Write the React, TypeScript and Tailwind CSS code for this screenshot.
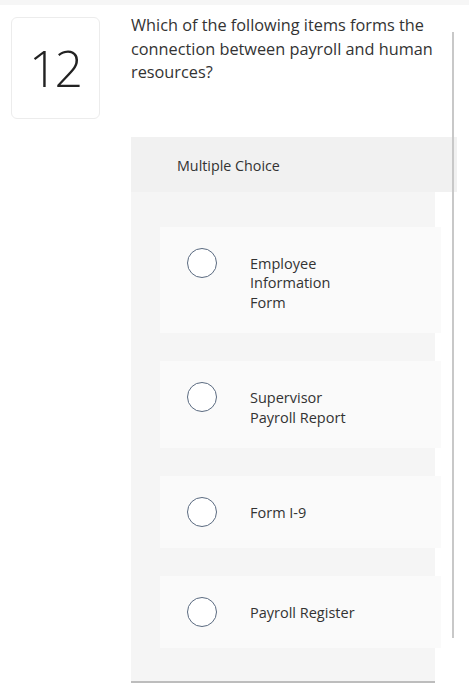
const options = [
	'Employee Information Form',
	'Supervisor Payroll Report',
	'Form I-9',
	'Payroll Register',
];

const OptionCard = ({ label }: { label: string }) => {
	return (
		<div className="flex items-start bg-[#fafafa] w-[281px] py-[21px] pl-[27px]">
			<div className="w-[30px] h-[30px] shrink-0 rounded-full border-[1.5px] border-[#5a6a80] bg-white"></div>
			<div className="ml-[33px] w-[112px] pt-[6px] text-[14.5px] leading-[19.5px] text-[#333333]">
				{label}
			</div>
		</div>
	);
};

const App = () => {
	return (
		<div
			className="relative w-[469px] h-[700px] bg-white overflow-hidden"
			style={{ fontFamily: '"Open Sans", "Liberation Sans", sans-serif' }}
		>
			<div className="h-[5px] bg-[#f6f6f6]"></div>

			<div className="flex">
				{/* numero da pregunta */}
				<div className="ml-[11px] mt-[12px] w-[89px] h-[102px] shrink-0 flex items-center justify-center rounded-md border border-[#ececec]">
					<span className="text-[50px] leading-none font-light tracking-[-3px] text-[#222222] pr-[2px]">
						12
					</span>
				</div>

				<div className="ml-[31px] mt-[9px] flex flex-col">
					<p className="w-[322px] text-[16.3px] leading-[23.5px] text-[#333333]">
						Which of the following items forms the connection
						between payroll and human resources?
					</p>

					{/* cabeceira */}
					<div className="mt-[52px] w-[326px] h-[55px] flex items-center bg-[#f1f1f1] pl-[46px] pt-[3px]">
						<span className="text-[14.3px] text-[#333333]">
							Multiple Choice
						</span>
					</div>

					{/* opcions */}
					<div className="w-[304px] bg-[#f5f5f5] pt-[35px] pb-[33px] border-b-2 border-[#bdbdbd]">
						<div className="flex flex-col gap-[28px] ml-[29px]">
							{options.map((o) => (
								<OptionCard key={o} label={o} />
							))}
						</div>
					</div>
				</div>
			</div>

			<div className="absolute left-[452px] top-[32px] w-[2px] h-[606px] bg-[#c8c8c8]"></div>
		</div>
	);
};

export default App;
